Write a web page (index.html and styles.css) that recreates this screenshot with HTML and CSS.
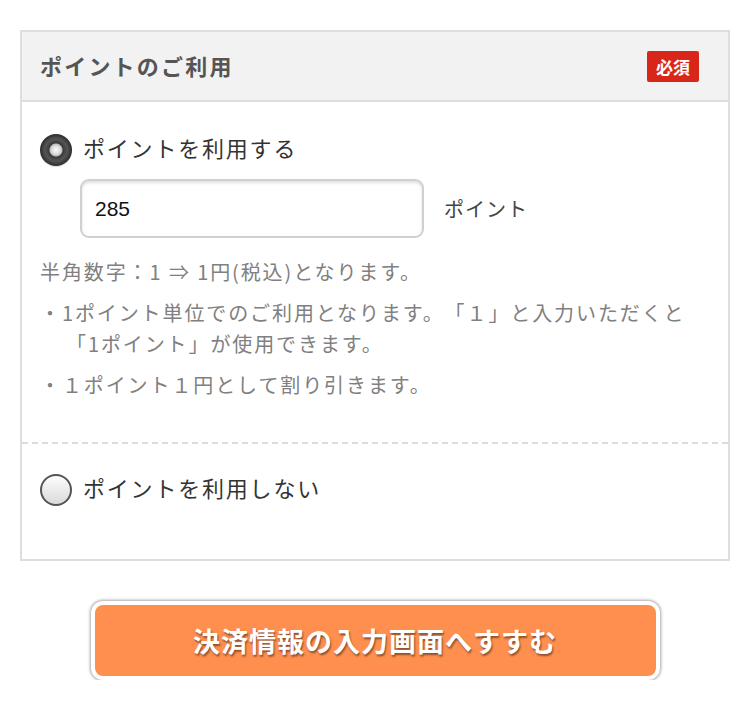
FILE: index.html
```html
<!DOCTYPE html>
<html lang="ja">
<head>
<meta charset="utf-8">
<title>ポイントのご利用</title>
<link rel="stylesheet" href="styles.css">
</head>
<body>
<div class="page">
  <section class="panel">
    <header class="panel-head">
      <h2 class="panel-title">ポイントのご利用</h2>
      <span class="badge">必須</span>
    </header>
    <div class="option option-use">
      <label class="radio-row">
        <span class="radio radio-on"></span>
        <span class="radio-label">ポイントを利用する</span>
      </label>
      <div class="input-row">
        <input class="point-input" type="text" value="285">
        <span class="unit">ポイント</span>
      </div>
      <p class="note">半角数字：1 ⇒ 1円(税込)となります。</p>
      <p class="note bullet">・1ポイント単位でのご利用となります。「１」と入力いただくと<br>「1ポイント」が使用できます。</p>
      <p class="note bullet">・１ポイント１円として割り引きます。</p>
    </div>
    <div class="option option-none">
      <label class="radio-row">
        <span class="radio radio-off"></span>
        <span class="radio-label">ポイントを利用しない</span>
      </label>
    </div>
  </section>
  <div class="actions">
    <button class="next-btn" type="button">決済情報の入力画面へすすむ</button>
  </div>
</div>
</body>
</html>
```
FILE: styles.css
```css
html, body {
  margin: 0;
  padding: 0;
  background: #fff;
}
body {
  font-family: "Noto Sans CJK JP", "Noto Sans", sans-serif;
  color: #333;
  text-spacing-trim: space-all;
}
.page {
  padding: 30px 20px 0 20px;
  width: 710px;
}
.panel {
  border: 2px solid #dedede;
  background: #fff;
}
.panel-head {
  background: #f2f2f2;
  border-bottom: 2px solid #dedede;
  height: 68px;
  display: flex;
  align-items: center;
  justify-content: space-between;
  padding: 0 29px 0 18px;
}
.panel-title {
  margin: -2px 0 0 0;
  font-size: 22px;
  font-weight: bold;
  color: #555;
  letter-spacing: 2.2px;
}
.badge {
  background: #d9261b;
  color: #fff;
  font-size: 17px;
  font-weight: bold;
  width: 52px;
  height: 31px;
  line-height: 31px;
  text-align: center;
  border-radius: 2px;
}
.option {
  padding: 0 18px;
}
.option-use {
  padding-top: 32px;
  padding-bottom: 42px;
  border-bottom: 2px dashed #dcdcdc;
}
.option-none {
  padding-top: 30px;
  padding-bottom: 53px;
}
.radio-row {
  display: flex;
  align-items: center;
  height: 32px;
}
.radio {
  width: 32px;
  height: 32px;
  border-radius: 50%;
  box-sizing: border-box;
  margin-right: 11px;
  flex: none;
}
.radio-on {
  background: radial-gradient(circle at 50% 50%, #fafafa 0, #e0e0e0 4px, #bdbdbd 6px, #3a3a3a 7px, #555 11px, #2c2c2c 16px);
  box-shadow: 0 1px 1px rgba(0,0,0,0.15);
}
.radio-off {
  border: 2px solid #555;
  background: linear-gradient(#fdfdfd, #dadada);
}
.radio-label {
  font-size: 22px;
  line-height: 32px;
  margin-top: -6px;
  color: #333;
  letter-spacing: 1.8px;
}
.input-row {
  display: flex;
  align-items: center;
  margin-top: 13px;
  padding-left: 40px;
}
.point-input {
  width: 344px;
  height: 59px;
  box-sizing: border-box;
  border: 2px solid #d0d0d0;
  border-radius: 9px;
  box-shadow: inset 0 2px 3px rgba(0,0,0,0.12);
  padding: 0 13px;
  font-family: "Liberation Sans", Arial, sans-serif;
  font-size: 21px;
  color: #111;
  background: #fff;
  outline: none;
}
.unit {
  margin-left: 20px;
  font-size: 20px;
  color: #444;
  letter-spacing: 1px;
}
.note {
  margin: 18px 0 0 0;
  font-size: 20px;
  line-height: 31px;
  color: #808080;
  letter-spacing: 1.9px;
}
.note.bullet {
  margin-top: 10px;
  padding-left: 26px;
  text-indent: -26px;
}
.actions {
  display: flex;
  justify-content: center;
  padding-top: 40px;
}
.next-btn {
  width: 569px;
  height: 79px;
  box-sizing: border-box;
  border: 4px solid #fff;
  border-radius: 12px;
  background: #ff8f4e;
  box-shadow: 0 0 3px 1px rgba(0,0,0,0.35);
  color: #fff;
  font-family: "Noto Sans CJK JP", sans-serif;
  font-size: 27px;
  font-weight: bold;
  letter-spacing: 1px;
  text-shadow: 1px 2px 2px rgba(0,0,0,0.45);
  cursor: pointer;
}
```
